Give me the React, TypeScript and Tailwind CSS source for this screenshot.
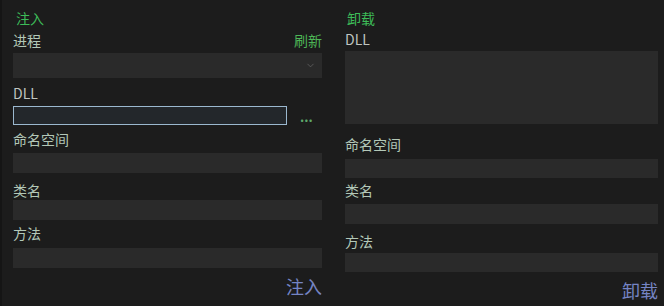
import { ChevronDown } from "lucide-react";

const font = { fontFamily: '"Noto Sans CJK SC", "Noto Sans", sans-serif' };

function Label({
  text,
  color = "text-[#b3c8b8]",
  className = "",
}: {
  text: string;
  color?: string;
  className?: string;
}) {
  return (
    <div className={`h-[18px] flex items-center text-[14px] leading-none ${color} ${className}`}>
      {text}
    </div>
  );
}

function Field({ className = "" }: { className?: string }) {
  return <div className={`bg-[#2a2a2a] ${className}`} />;
}

export default function App() {
  return (
    <div
      className="w-[664px] h-[306px] bg-[#1c1c1c] border-l-2 border-[#151515] flex pl-[11px] pr-[6px] gap-[23px] overflow-hidden"
      style={font}
    >
      {/* 注入 */}
      <div className="w-[309px] flex flex-col">
        <Label text="注入" color="text-[#3dbb58]" className="mt-[9px] ml-[3px]" />
        <div className="mt-[4px] flex items-center justify-between">
          <Label text="进程" />
          <span className="text-[14px] leading-none text-[#4cb556]">刷新</span>
        </div>
        <div className="mt-[4px] h-[25px] bg-[#2a2a2a] flex items-center justify-end pr-[6px]">
          <ChevronDown size={11} strokeWidth={1.5} className="text-[#6a6a6a]" />
        </div>
        <Label text="DLL" color="text-[#bfc5c0]" className="mt-[6px]" />
        <div className="mt-[4px] flex items-center">
          <div className="w-[274px] h-[19px] border border-[#9bb8cf] bg-[#23272b]" />
          <span className="ml-[13px] text-[13px] font-bold leading-none text-[#5ea86a] pt-[2px]">...</span>
        </div>
        <Label text="命名空间" className="mt-[5px]" />
        <Field className="mt-[5px] h-[20px]" />
        <Label text="类名" className="mt-[8px]" />
        <Field className="mt-[1px] h-[20px]" />
        <Label text="方法" className="mt-[4px]" />
        <Field className="mt-[6px] h-[20px]" />
        <div className="mt-[7px] h-[22px] flex items-center justify-end">
          <span className="text-[18px] leading-none text-[#7584c4]">注入</span>
        </div>
      </div>

      {/* 卸载 */}
      <div className="w-[313px] flex flex-col">
        <Label text="卸载" color="text-[#3dbb58]" className="mt-[9px] ml-[2px]" />
        <Label text="DLL" color="text-[#bfc5c0]" className="mt-[3px]" />
        <Field className="mt-[3px] h-[73px]" />
        <Label text="命名空间" className="mt-[11px]" />
        <Field className="mt-[6px] h-[19px]" />
        <Label text="类名" className="mt-[3px]" />
        <Field className="mt-[5px] h-[20px]" />
        <Label text="方法" className="mt-[8px]" />
        <Field className="mt-[3px] h-[19px]" />
        <div className="mt-[8px] h-[20px] flex items-center justify-end">
          <span className="text-[18px] leading-none text-[#7584c4]">卸载</span>
        </div>
      </div>
    </div>
  );
}
